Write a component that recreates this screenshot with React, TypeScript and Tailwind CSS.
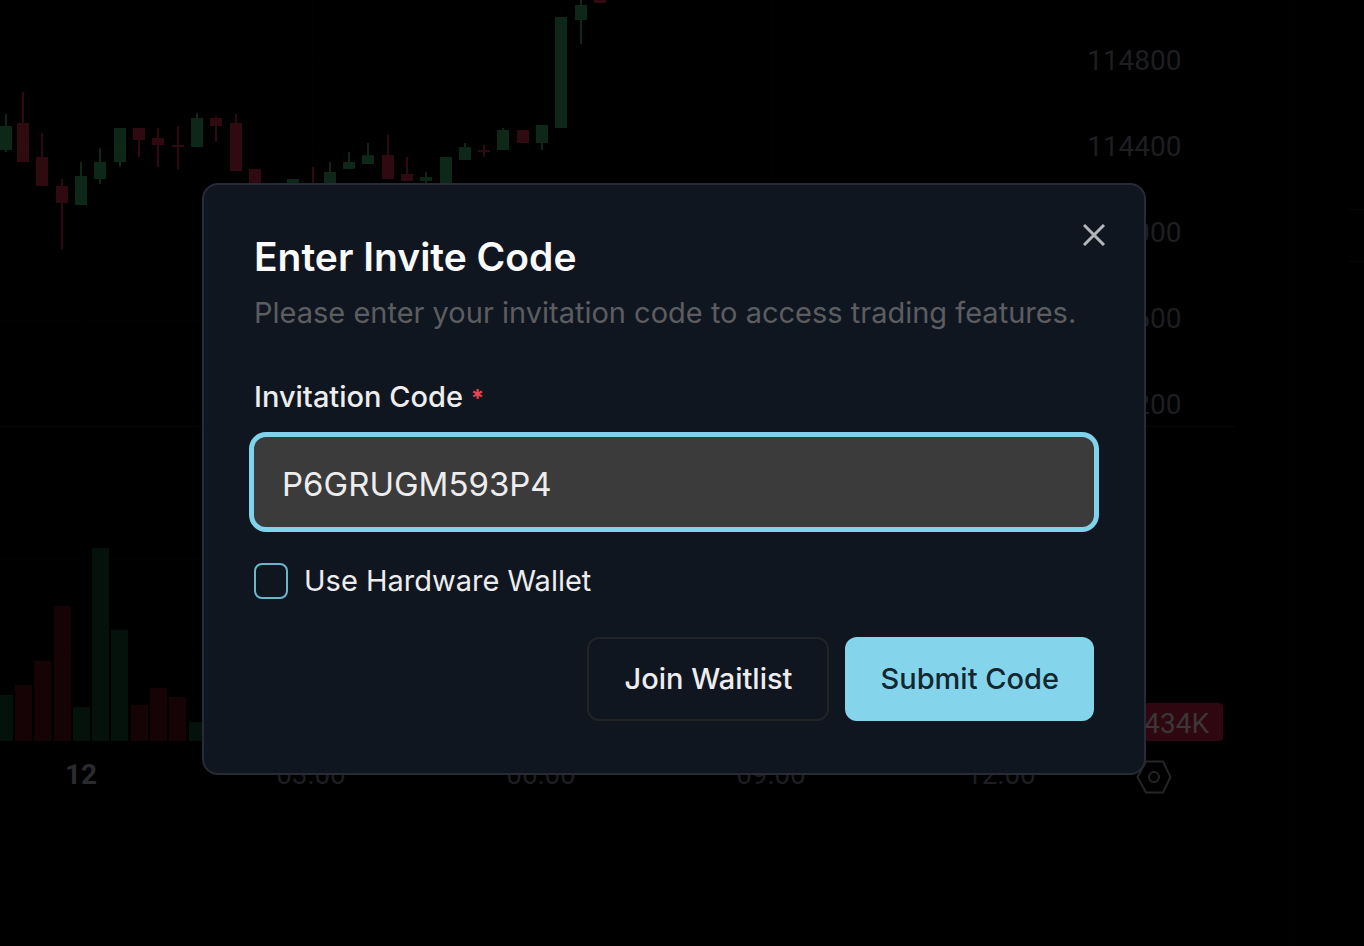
import React, { useState } from 'react';

type Candle = {
  x: number;
  up: boolean;
  high: number;
  top: number;
  bottom: number;
  low: number;
};

const candles: Candle[] = [
  { x: 6, up: true, high: 114, top: 126, bottom: 150, low: 152 },
  { x: 23, up: false, high: 92, top: 123, bottom: 162, low: 162 },
  { x: 42, up: false, high: 133, top: 157, bottom: 186, low: 186 },
  { x: 62, up: false, high: 179, top: 186, bottom: 203, low: 249 },
  { x: 81, up: true, high: 162, top: 176, bottom: 205, low: 205 },
  { x: 100, up: true, high: 148, top: 162, bottom: 179, low: 184 },
  { x: 120, up: true, high: 128, top: 128, bottom: 162, low: 167 },
  { x: 139, up: false, high: 128, top: 128, bottom: 140, low: 157 },
  { x: 158, up: false, high: 128, top: 138, bottom: 145, low: 167 },
  { x: 178, up: false, high: 126, top: 145, bottom: 147, low: 169 },
  { x: 197, up: true, high: 113, top: 118, bottom: 147, low: 147 },
  { x: 216, up: false, high: 116, top: 118, bottom: 126, low: 142 },
  { x: 236, up: false, high: 114, top: 123, bottom: 171, low: 171 },
  { x: 255, up: false, high: 169, top: 169, bottom: 190, low: 190 },
  { x: 274, up: false, high: 188, top: 190, bottom: 198, low: 204 },
  { x: 293, up: true, high: 179, top: 179, bottom: 198, low: 198 },
  { x: 313, up: false, high: 167, top: 188, bottom: 196, low: 200 },
  { x: 330, up: true, high: 162, top: 172, bottom: 194, low: 194 },
  { x: 349, up: true, high: 152, top: 162, bottom: 169, low: 169 },
  { x: 368, up: true, high: 143, top: 155, bottom: 164, low: 164 },
  { x: 388, up: false, high: 135, top: 155, bottom: 179, low: 179 },
  { x: 407, up: false, high: 157, top: 174, bottom: 181, low: 181 },
  { x: 426, up: true, high: 172, top: 177, bottom: 181, low: 186 },
  { x: 446, up: true, high: 157, top: 157, bottom: 190, low: 190 },
  { x: 465, up: true, high: 143, top: 147, bottom: 160, low: 160 },
  { x: 484, up: false, high: 145, top: 150, bottom: 152, low: 157 },
  { x: 503, up: true, high: 128, top: 130, bottom: 150, low: 150 },
  { x: 523, up: false, high: 130, top: 130, bottom: 143, low: 143 },
  { x: 542, up: true, high: 125, top: 125, bottom: 143, low: 150 },
  { x: 561, up: true, high: 17, top: 17, bottom: 128, low: 128 },
  { x: 581, up: true, high: 0, top: 5, bottom: 20, low: 44 },
  { x: 600, up: false, high: 0, top: 0, bottom: 3, low: 3 },
];

// heights are measured up from the bottom of the volume pane
const volumes = [
  { x: -4, up: true, height: 46 },
  { x: 15, up: false, height: 56 },
  { x: 34, up: false, height: 80 },
  { x: 54, up: false, height: 135 },
  { x: 73, up: true, height: 34 },
  { x: 92, up: true, height: 193 },
  { x: 111, up: true, height: 111 },
  { x: 131, up: false, height: 36 },
  { x: 150, up: false, height: 53 },
  { x: 169, up: false, height: 44 },
  { x: 189, up: true, height: 19 },
];

const prices = ['114800', '114400', '114000', '113600', '113200'];
const times = ['12', '03:00', '06:00', '09:00', '12:00'];
const verticals = [81, 312, 542, 771, 1001];

const PriceChart = () => (
  <svg className="h-full min-w-0 flex-1" aria-hidden="true">
    {verticals.map((x) => (
      <rect key={x} x={x} y={0} width={1} height={426} fill="#020206" />
    ))}
    {[62, 148, 234, 320, 406].map((y) => (
      <rect key={y} x={0} y={y} width="100%" height={1} fill="#020206" />
    ))}
    {candles.map((c) => (
      <g key={c.x} fill={c.up ? '#0d2818' : '#2f0a10'}>
        <rect x={c.x - 1} y={c.high} width={2} height={c.low - c.high} />
        <rect x={c.x - 6} y={c.top} width={12} height={c.bottom - c.top} />
      </g>
    ))}
  </svg>
);

const VolumeChart = () => (
  <svg className="h-full min-w-0 flex-1" aria-hidden="true">
    {verticals.map((x) => (
      <rect key={x} x={x} y={0} width={1} height={314} fill="#020206" />
    ))}
    {[132, 223].map((y) => (
      <rect key={y} x={0} y={y} width="100%" height={1} fill="#020206" />
    ))}
    {volumes.map((v) => (
      <rect
        key={v.x}
        x={v.x}
        y={314 - v.height}
        width={17}
        height={v.height}
        fill={v.up ? '#05120c' : '#150306'}
      />
    ))}
  </svg>
);

const SettingsIcon = () => (
  <svg width="36" height="36" viewBox="0 0 36 36" fill="none" stroke="#242528" strokeWidth="2">
    <path d="M10 2.5h17L34.5 18 27 33.5H10L1.5 18z" />
    <circle cx="18" cy="18" r="5" />
  </svg>
);

const Chart = () => (
  <div className="flex min-h-screen bg-black font-['Roboto',sans-serif] text-[28px] leading-8 text-[#1d1e21]">
    <section className="flex min-w-0 flex-1 flex-col">
      <div className="flex h-[427px] border-b border-[#070708]">
        <PriceChart />
        <div className="w-[170px] pt-[18px] pl-[22px]">
          {prices.map((price) => (
            <div key={price} className="flex h-[86px] items-center">
              {price}
            </div>
          ))}
        </div>
      </div>
      <div className="flex h-[314px]">
        <VolumeChart />
        <div className="flex w-[170px] items-end pr-3">
          <span className="flex h-[38px] flex-1 items-center justify-end rounded-r-sm bg-[#2f0710] pt-1 pr-3.5 text-[#3b3638]">
            112.434K
          </span>
        </div>
      </div>
      <div className="flex h-[72px] items-center">
        <div className="-ml-[34px] flex min-w-0 flex-1 pb-1">
          {times.map((time) => (
            <span
              key={time}
              className="w-[230px] shrink-0 text-center first:font-bold first:text-[#2a2b2e]"
            >
              {time}
            </span>
          ))}
        </div>
        <div className="flex w-[170px] justify-center pl-2">
          <SettingsIcon />
        </div>
      </div>
    </section>
    <div className="w-[62px] border-r-8 border-[#010101]" />
    <aside className="w-[67px] pt-[209px] pl-[51px]">
      <div className="h-[53px] border-y border-[#060608]" />
    </aside>
  </div>
);

const InviteDialog = () => {
  const [code, setCode] = useState('P6GRUGM593P4');
  const [hardware, setHardware] = useState(false);

  return (
    <div className="fixed inset-0 flex items-center justify-center pt-3 pr-4">
      <form
        role="dialog"
        aria-labelledby="invite-title"
        onSubmit={(e) => e.preventDefault()}
        className="relative w-full max-w-[944px] rounded-2xl border-2 border-[#272b35] bg-[#101620] px-[50px] py-[52px] font-['Inter',sans-serif] text-[29px] text-[#ededee]"
      >
        <button
          type="button"
          aria-label="Close"
          className="absolute top-[30px] right-[30px] flex size-10 items-center justify-center text-[#b4b6ba]"
        >
          <svg width="22" height="22" viewBox="0 0 22 22" stroke="currentColor" strokeWidth="3">
            <path d="M1 1l20 20M21 1L1 21" />
          </svg>
        </button>

        <h2 id="invite-title" className="text-[39px] leading-10 font-semibold text-[#fafafa]">
          Enter Invite Code
        </h2>
        <p className="mt-4 leading-10 text-[#5c5d60]">
          Please enter your invitation code to access trading features.
        </p>

        <label htmlFor="invite-code" className="mt-[50px] block leading-7 font-medium">
          Invitation Code <span className="text-2xl leading-7 font-bold text-[#e5484d]">*</span>
        </label>
        <input
          id="invite-code"
          type="text"
          value={code}
          onChange={(e) => setCode(e.target.value)}
          className="mt-6 block h-[90px] w-full rounded-xl bg-[#3b3b3b] px-7 pt-1 text-[33px] ring-[5px] ring-[#7fd3ea] outline-none"
        />

        <label className="mt-9 flex items-center gap-4 leading-9">
          <input
            type="checkbox"
            checked={hardware}
            onChange={(e) => setHardware(e.target.checked)}
            className="h-9 w-[34px] appearance-none rounded-lg border-2 border-[#6cb5ca] checked:bg-[#84d5ec]"
          />
          Use Hardware Wallet
        </label>

        <div className="mt-[38px] flex justify-end gap-4 font-medium">
          <button type="button" className="h-[84px] rounded-xl border-2 border-[#222327] px-[35px]">
            Join Waitlist
          </button>
          <button type="submit" className="h-[84px] rounded-xl bg-[#84d5ec] px-[35px] text-[#14262f]">
            Submit Code
          </button>
        </div>
      </form>
    </div>
  );
};

const App = () => {
  return (
    <main>
      <Chart />
      <InviteDialog />
    </main>
  );
};

export default App;
